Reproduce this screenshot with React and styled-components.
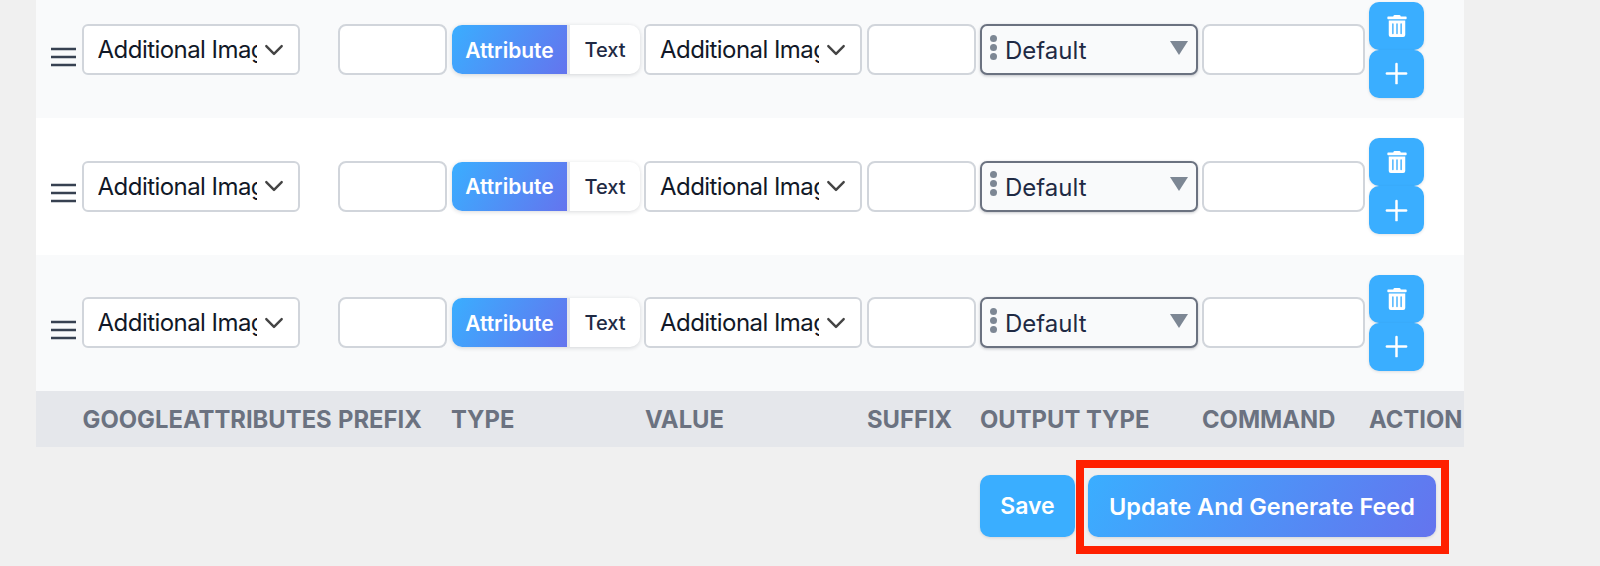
import styled, { createGlobalStyle } from 'styled-components';
import { FaTrashAlt } from 'react-icons/fa';
import { Plus } from 'lucide-react';

const COLUMNS = '46.6px 255.4px 114px 193px 222px 113px 222px 167px 95px';
const GRADIENT = 'linear-gradient(120deg, #3aaeff 0%, #6474ee 100%)';
const CHEVRON =
  "url(\"data:image/svg+xml,%3Csvg xmlns='http://www.w3.org/2000/svg' viewBox='0 0 20 20' fill='none' stroke='%23444' stroke-width='2.2' stroke-linecap='round' stroke-linejoin='round'%3E%3Cpath d='M3 6.5l7 7 7-7'/%3E%3C/svg%3E\")";

const GlobalStyle = createGlobalStyle`
  html, body {
    margin: 0;
    height: 566px;
    overflow: hidden;
    background: #f0f0f0;
    font-family: Inter, "Liberation Sans", sans-serif;
  }
`;

export default function App() {
  const rows = [0, 1, 2];
  return (
    <>
      <GlobalStyle />
      <Panel>
        {rows.map((r) => (
          <Row key={r} $striped={r % 2 === 0}>
            <Handle viewBox="0 0 25 20" aria-hidden="true">
              <path d="M0 2h25M0 10h25M0 18h25" />
            </Handle>
            <Select defaultValue="image">
              <option value="image">Additional Image Link</option>
            </Select>
            <SmallInput />
            <Toggle>
              <ToggleOption $active>Attribute</ToggleOption>
              <ToggleOption>Text</ToggleOption>
            </Toggle>
            <Select defaultValue="image">
              <option value="image">Additional Image Link</option>
            </Select>
            <SmallInput />
            <OutputSelect>
              <Grip>
                <i />
                <i />
                <i />
              </Grip>
              <OutputLabel>Default</OutputLabel>
              <Caret />
            </OutputSelect>
            <CommandInput />
            <Actions>
              <ActionButton>
                <FaTrashAlt size={22} />
              </ActionButton>
              <ActionButton>
                <Plus size={33} strokeWidth={1.8} />
              </ActionButton>
            </Actions>
          </Row>
        ))}
        <HeaderRow>
          <span />
          <span>GoogleAttributes</span>
          <span>Prefix</span>
          <TypeLabel>Type</TypeLabel>
          <span>Value</span>
          <span>Suffix</span>
          <span>Output Type</span>
          <span>Command</span>
          <span>Action</span>
        </HeaderRow>
      </Panel>
      <Footer>
        <SaveButton>Save</SaveButton>
        <GenerateButton>
          Update And Generate Feed
          <Highlight />
        </GenerateButton>
      </Footer>
    </>
  );
}

const Panel = styled.div`
  width: 1428px;
  margin: -18.67px 0 0 36px;
`;

const Row = styled.div`
  display: grid;
  grid-template-columns: ${COLUMNS};
  align-items: center;
  height: 136.67px;
  background: ${(p) => (p.$striped ? '#f9fafb' : '#ffffff')};
`;

const Handle = styled.svg`
  width: 25px;
  height: 20px;
  margin: 14px 0 0 15px;
  fill: none;
  stroke: #374151;
  stroke-width: 2.4px;
`;

const Select = styled.select`
  appearance: none;
  box-sizing: border-box;
  width: 218px;
  height: 51px;
  margin-left: -0.6px;
  padding: 0 41px 0 13.6px;
  font: 400 24px Inter, "Liberation Sans", sans-serif;
  letter-spacing: -0.55px;
  color: #111827;
  background: #fff ${CHEVRON} no-repeat right 13px center / 22px 22px;
  border: 2px solid #d1d5db;
  border-radius: 6px;
`;

const SmallInput = styled.input`
  box-sizing: border-box;
  width: 109px;
  height: 51px;
  background: #fff;
  border: 2px solid #d1d5db;
  border-radius: 8px;
`;

const CommandInput = styled(SmallInput)`
  width: 163px;
`;

const Toggle = styled.div`
  display: flex;
  width: 188px;
  height: 49px;
  border-radius: 10px;
  background: #fff;
  box-shadow: 0 1px 4px rgba(17, 24, 39, 0.16);
`;

const ToggleOption = styled.div`
  display: flex;
  align-items: center;
  justify-content: center;
  padding-top: 1px;
  font-size: ${(p) => (p.$active ? '21px' : '20px')};
  font-weight: ${(p) => (p.$active ? 600 : 500)};
  flex: ${(p) => (p.$active ? '0 0 115px' : '1')};
  color: ${(p) => (p.$active ? '#fff' : '#1f2a44')};
  background: ${(p) => (p.$active ? GRADIENT : 'transparent')};
  border-radius: ${(p) => (p.$active ? '10px 0 0 10px' : '0 10px 10px 0')};
  border-left: ${(p) => (p.$active ? 'none' : '3px solid #e5e7eb')};
`;

const OutputSelect = styled.div`
  box-sizing: border-box;
  display: flex;
  align-items: center;
  width: 218px;
  height: 51px;
  padding: 0 8px 0 8px;
  background: #f9fafb;
  border: 2px solid #6b7280;
  border-radius: 7px;
  box-shadow: 0 1px 3px rgba(17, 24, 39, 0.25);
`;

const Grip = styled.div`
  display: flex;
  flex-direction: column;
  gap: 2px;
  margin: -5px 8px 0 0;
  i {
    width: 7px;
    height: 7px;
    border-radius: 50%;
    background: #7d8794;
  }
`;

const OutputLabel = styled.span`
  flex: 1;
  padding-top: 2px;
  font-size: 24px;
  color: #1f2a44;
`;

const Caret = styled.span`
  width: 0;
  height: 0;
  margin-top: -4px;
  border-left: 9px solid transparent;
  border-right: 9px solid transparent;
  border-top: 14px solid #7d8794;
`;

const Actions = styled.div`
  display: flex;
  flex-direction: column;
  width: 55px;
  margin-left: 0.5px;
`;

const ActionButton = styled.button`
  display: flex;
  align-items: center;
  justify-content: center;
  height: 48px;
  padding: 0;
  color: #fff;
  background: #3aaeff;
  border: none;
  border-radius: 10px;
  box-shadow: 0 1px 3px rgba(17, 24, 39, 0.12);
`;

const HeaderRow = styled.div`
  display: grid;
  grid-template-columns: ${COLUMNS};
  align-items: center;
  height: 56px;
  overflow: hidden;
  background: #e5e7eb;
  font-size: 23.8px;
  font-weight: 700;
  color: #6b7280;
  text-transform: uppercase;
  white-space: nowrap;
`;

const TypeLabel = styled.span`
  margin-left: -1px;
`;

const Footer = styled.div`
  display: flex;
  gap: 13px;
  margin: 28px 0 0 980px;
`;

const SaveButton = styled.button`
  width: 95px;
  height: 62px;
  padding: 0;
  font: 600 23px Inter, "Liberation Sans", sans-serif;
  color: #fff;
  background: #3aaeff;
  border: none;
  border-radius: 10px;
  box-shadow: 0 1px 3px rgba(17, 24, 39, 0.12);
`;

const GenerateButton = styled(SaveButton)`
  position: relative;
  width: 348px;
  font-size: 23.5px;
  background: ${GRADIENT};
`;

const Highlight = styled.span`
  position: absolute;
  inset: -15px -13px -17px -12px;
  border: 8px solid #ff2000;
`;
